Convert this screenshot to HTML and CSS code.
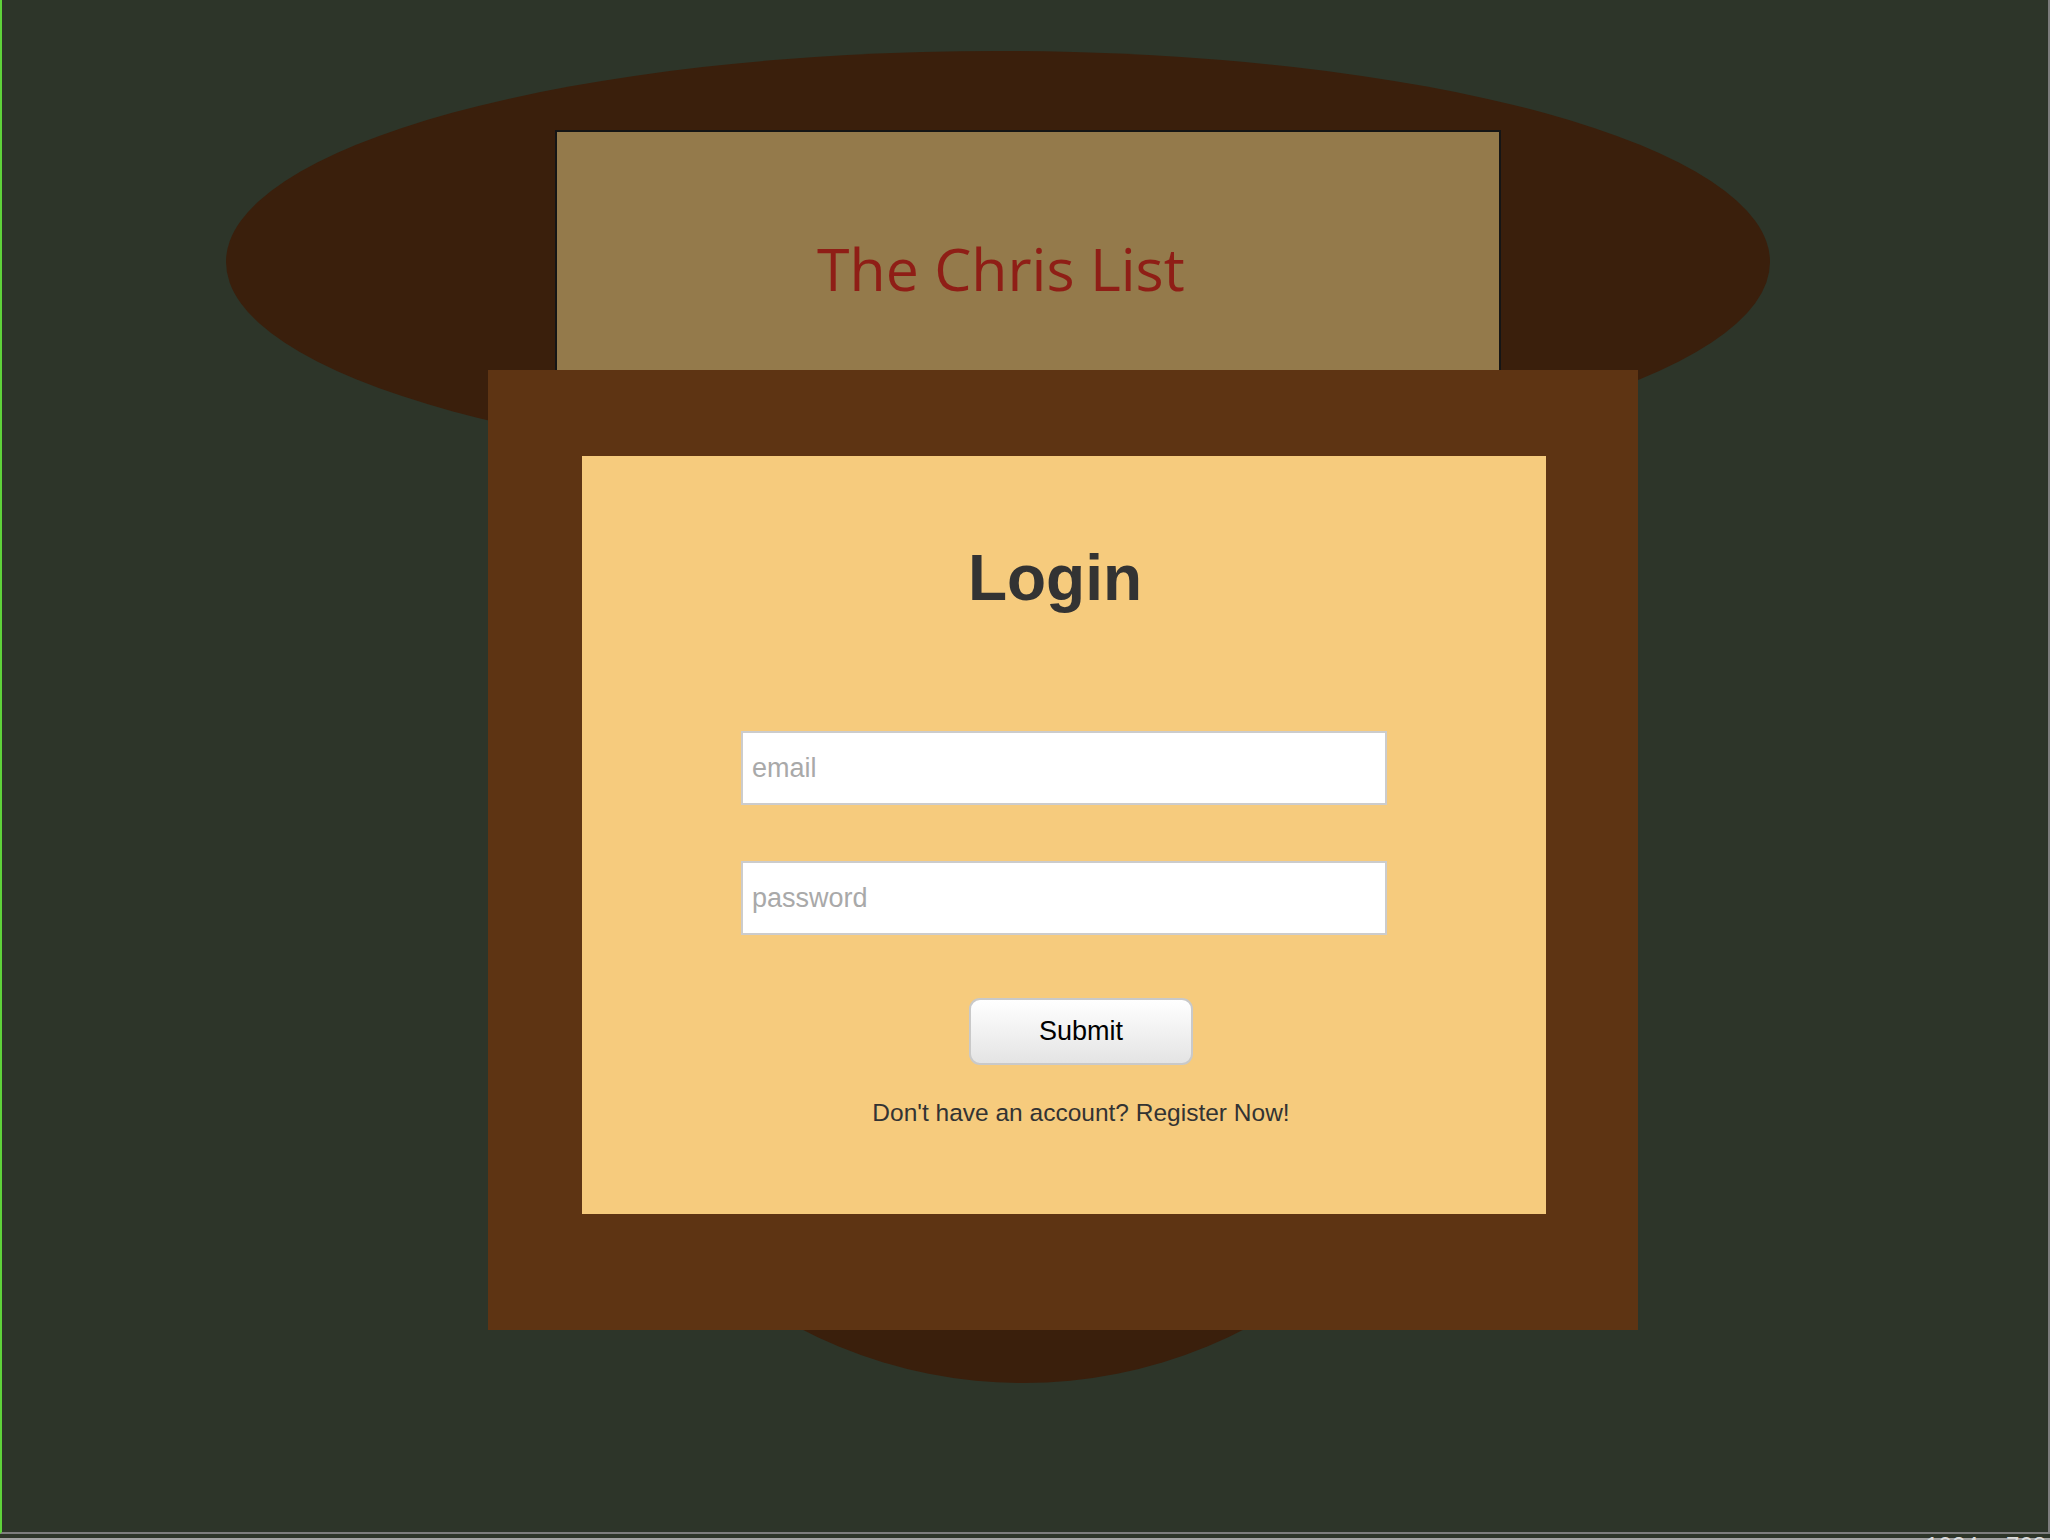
FILE: index.html
```html
<!DOCTYPE html>
<html lang="en">
<head>
<meta charset="utf-8">
<title>The Chris List - Login</title>
<link rel="stylesheet" href="styles.css">
</head>
<body>
<div class="screen">
  <div class="stage">
    <div class="oval">
      <header class="banner">
        <h1 class="brand">The Chris List</h1>
      </header>
    </div>
    <main class="card">
      <section class="panel">
        <h2 class="title">Login</h2>
        <form class="form" onsubmit="return false">
          <input class="field" type="email" placeholder="email">
          <input class="field field-gap" type="password" placeholder="password">
          <div class="actions">
            <button class="submit" type="submit">Submit</button>
            <p class="note">Don't have an account? Register Now!</p>
          </div>
        </form>
      </section>
    </main>
  </div>
</div>
<div class="statusbar"><span class="dims">1024 × 768</span></div>
</body>
</html>
```

FILE: styles.css
```css
html, body {
  margin: 0;
  padding: 0;
}
body {
  width: 2050px;
  height: 1540px;
  overflow: hidden;
  background: #2d3529;
  font-family: "Liberation Sans", Arial, sans-serif;
}
.screen {
  box-sizing: border-box;
  height: 1534px;
  border-left: 2px solid #5fd23a;
  border-right: 2px solid #7d7d7d;
  border-bottom: 2px solid #7d7d7d;
  overflow: hidden;
}
.stage {
  padding-top: 51px;
}
.oval {
  box-sizing: border-box;
  width: 1544px;
  height: 422px;
  margin-left: 224px;
  padding-top: 79px;
  border-radius: 50%;
  background: #3a1f0c;
}
.banner {
  box-sizing: border-box;
  width: 946px;
  height: 300px;
  margin-left: 329px;
  border: 2px solid #151515;
  background: #947a4b;
  overflow: hidden;
}
.brand {
  margin: 96px 0 0 260px;
  font-family: "Open Sans", sans-serif;
  font-weight: 400;
  font-size: 59px;
  line-height: 1.362;
  color: #8f1e16;
  white-space: nowrap;
}
.card {
  position: relative;
  box-sizing: border-box;
  width: 1150px;
  height: 960px;
  margin: -103px 0 0 486px;
  padding: 86px 92px 116px 94px;
  background: #5e3413;
}
.card::before {
  content: "";
  position: absolute;
  z-index: -1;
  left: 52px;
  top: 47px;
  width: 966px;
  height: 966px;
  border-radius: 50%;
  background: #3a1f0c;
}
.panel {
  box-sizing: border-box;
  width: 964px;
  height: 758px;
  background: #f6cb7d;
  overflow: hidden;
}
.title {
  margin: 90px 18px 0 0;
  text-align: center;
  font-size: 64px;
  line-height: 65px;
  font-weight: 700;
  color: #333333;
}
.form {
  display: flex;
  flex-direction: column;
  margin: 120px 0 0 159px;
  width: 646px;
}
.field {
  box-sizing: border-box;
  width: 646px;
  height: 74px;
  margin: 0;
  padding: 0 0 0 9px;
  border: 2px solid #cccccc;
  border-radius: 0;
  background: #ffffff;
  font-family: "Liberation Sans", Arial, sans-serif;
  font-size: 27px;
  color: #333;
  outline: none;
}
.field::placeholder {
  color: #a9a9a9;
}
.field-gap {
  margin-top: 56px;
}
.actions {
  display: flex;
  flex-direction: column;
  align-items: center;
  width: 964px;
  margin-left: -159px;
  padding-left: 34px;
  box-sizing: border-box;
}
.submit {
  box-sizing: border-box;
  width: 224px;
  height: 67px;
  margin-top: 63px;
  border: 2px solid #c9c9c9;
  border-radius: 11px;
  background: linear-gradient(#ffffff, #e4e4e4);
  font-family: "Liberation Sans", Arial, sans-serif;
  font-size: 27px;
  color: #000;
}
.note {
  margin: 36px 0 0;
  font-size: 24.5px;
  line-height: 24px;
  color: #333333;
  white-space: nowrap;
}
.statusbar {
  display: flex;
  justify-content: flex-end;
  margin-top: 4px;
  height: 2px;
  background: #a3a3a3;
  overflow: visible;
}
.dims {
  margin-right: 4px;
  font-size: 24px;
  line-height: 24px;
  margin-top: -4px;
  color: #dcdcdc;
  height: 6px;
  overflow: hidden;
}
```
